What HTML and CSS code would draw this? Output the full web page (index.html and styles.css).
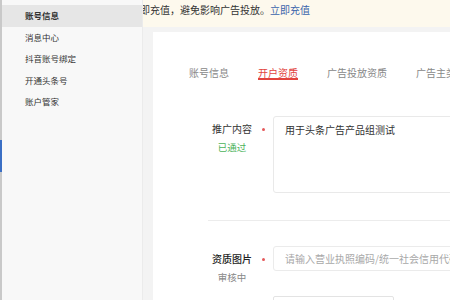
FILE: index.html
```html
<!DOCTYPE html>
<html lang="zh-CN">
  <head>
    <meta charset="UTF-8" />
    <meta name="viewport" content="width=device-width, initial-scale=1.0" />
    <title>账号信息 - 开户资质</title>
    <link rel="stylesheet" href="styles.css">
  </head>
  <body>
    <div class="rail">
      <div class="rail-mark"></div>
    </div>

    <div class="sidebar">
      <div class="menu-item active">账号信息</div>
      <div class="menu-item">消息中心</div>
      <div class="menu-item">抖音账号绑定</div>
      <div class="menu-item">开通头条号</div>
      <div class="menu-item">账户管家</div>
    </div>

    <div class="main">
      <div class="notice">
        <span class="notice-text">立即充值，避免影响广告投放。<a href="#">立即充值</a></span>
      </div>

      <div class="card">
        <div class="tabs">
          <div class="tab">账号信息</div>
          <div class="tab active">开户资质</div>
          <div class="tab">广告投放资质</div>
          <div class="tab">广告主类别</div>
        </div>

        <div class="form-row first">
          <div class="field-label">
            <div class="label-line">
              <span class="label-name">推广内容</span>
              <span class="required"></span>
            </div>
            <div class="label-status passed">已通过</div>
          </div>
          <textarea class="field-area">用于头条广告产品组测试</textarea>
        </div>

        <div class="divider"></div>

        <div class="form-row">
          <div class="field-label">
            <div class="label-line">
              <span class="label-name strong">资质图片</span>
              <span class="required"></span>
            </div>
            <div class="label-status">审核中</div>
          </div>
          <div class="field-col">
            <input
              type="text"
              class="field-input"
              placeholder="请输入营业执照编码/统一社会信用代码"
            />
            <div class="upload-box"></div>
          </div>
        </div>
      </div>
    </div>
  </body>
</html>
```

FILE: styles.css
```css
body {
  margin: 0;
  display: flex;
  height: 300px;
  overflow: hidden;
  font-family: "Noto Sans CJK SC", "Noto Sans", sans-serif;
  color: #333;
  background-color: #f3f3f3;
}
.rail {
  width: 2px;
  flex-shrink: 0;
  background-color: #c9c9c9;
  padding-top: 140px;
  box-sizing: border-box;
}
.rail-mark {
  height: 32px;
  background-color: #3b6fc4;
}
.sidebar {
  width: 141px;
  flex-shrink: 0;
  padding-top: 5px;
  background-color: #f8f8f8;
  border-right: 1px solid #ebebeb;
  box-sizing: border-box;
}
.menu-item {
  height: 21.5px;
  line-height: 21.5px;
  padding-left: 23px;
  font-size: 8.5px;
  color: #333;
}
.menu-item.active {
  background-color: #e6e6e6;
  font-weight: bold;
}
.main {
  flex: 1;
  min-width: 0;
  display: flex;
  flex-direction: column;
  overflow: hidden;
}
.notice {
  height: 27px;
  flex-shrink: 0;
  line-height: 20px;
  font-size: 10px;
  white-space: nowrap;
  background-color: #fdf9ed;
  overflow: hidden;
}
.notice-text {
  display: inline-block;
  margin-left: -13px;
}
.notice a {
  color: #3a64ab;
  text-decoration: none;
}
.card {
  flex: 1;
  margin: 5px 0 0 10px;
  padding-left: 36px;
  background-color: white;
  overflow: hidden;
}
.tabs {
  display: flex;
  gap: 29px;
  padding-top: 35px;
  white-space: nowrap;
}
.tab {
  font-size: 10px;
  line-height: 11px;
  color: #888;
  border-bottom: 2px solid transparent;
}
.tab.active {
  color: #e2433d;
  border-bottom-color: #e2433d;
}
.form-row {
  display: flex;
  margin-left: 23px;
}
.form-row.first {
  margin-top: 36px;
}
.field-label {
  width: 61px;
  flex-shrink: 0;
  padding-top: 6px;
}
.label-line {
  display: flex;
  align-items: center;
  height: 14px;
}
.label-name {
  width: 40px;
  font-size: 10px;
  line-height: 14px;
  color: #333;
}
.label-name.strong {
  color: #222;
  font-weight: 500;
}
.required {
  width: 3px;
  height: 3px;
  margin-left: 10px;
  border-radius: 50%;
  background-color: #e5585a;
}
.label-status {
  width: 40px;
  margin-top: 4px;
  text-align: center;
  font-size: 9.5px;
  line-height: 14px;
  color: #888;
}
.label-status.passed {
  color: #4cb35a;
}
.field-area {
  width: 220px;
  height: 77px;
  flex-shrink: 0;
  padding: 6px 11px;
  border: 1px solid #e9e9e9;
  border-radius: 3px;
  font-family: inherit;
  font-size: 10px;
  line-height: 14px;
  color: #333;
  resize: none;
  box-sizing: border-box;
}
.divider {
  height: 1px;
  margin: 27px 0 25px 19px;
  background-color: #ececec;
}
.field-col {
  display: flex;
  flex-direction: column;
  gap: 25px;
}
.field-input {
  width: 220px;
  height: 25px;
  padding: 0 11px;
  border: 1px solid #ebebeb;
  border-radius: 3px;
  font-family: inherit;
  font-size: 10px;
  color: #333;
  box-sizing: border-box;
}
.field-input::placeholder {
  color: #a8a8a8;
}
.upload-box {
  width: 121px;
  height: 30px;
  border: 1px solid #e3e3e3;
  border-radius: 2px;
  box-sizing: border-box;
}
```
